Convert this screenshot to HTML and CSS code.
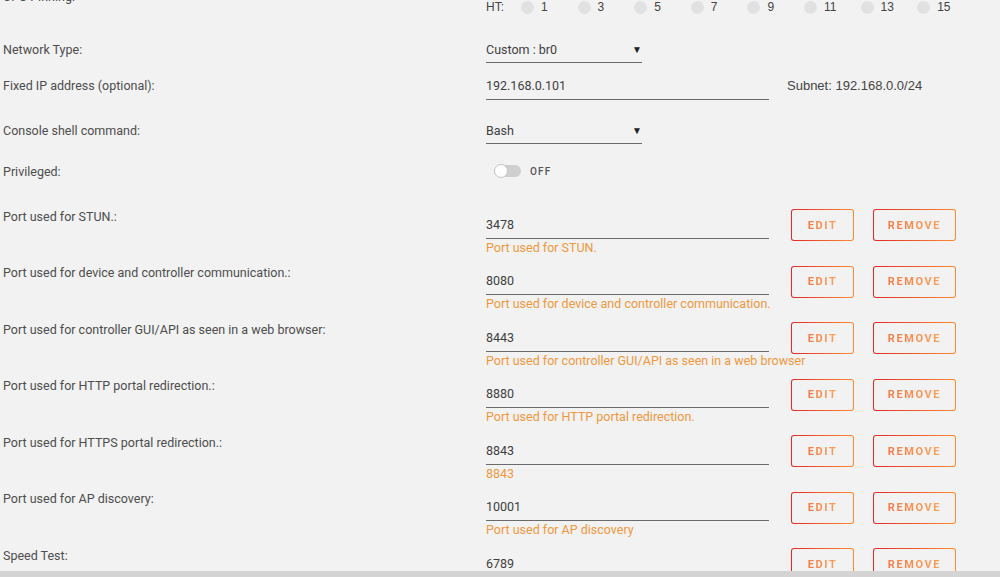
FILE: index.html
```html
<!DOCTYPE html>
<html lang="en">
<head>
    <meta charset="UTF-8">
    <meta name="viewport" content="width=device-width, initial-scale=1.0">
    <title>Container Settings</title>
    <link rel="stylesheet" href="styles.css">
</head>
<body>

    <div class="settings">
        <!-- CPU pinning -->
        <div class="row row-cpu">
            <div class="label">CPU Pinning:</div>
            <div class="cpu-line">
                <span class="cpu-tag">HT:</span>
                <span class="cpu"><span class="dot"></span>1</span>
                <span class="cpu"><span class="dot"></span>3</span>
                <span class="cpu"><span class="dot"></span>5</span>
                <span class="cpu"><span class="dot"></span>7</span>
                <span class="cpu"><span class="dot"></span>9</span>
                <span class="cpu"><span class="dot"></span>11</span>
                <span class="cpu"><span class="dot"></span>13</span>
                <span class="cpu"><span class="dot"></span>15</span>
            </div>
        </div>

        <div class="row row-network">
            <div class="label">Network Type:</div>
            <div class="field select">Custom : br0<span class="arrow">&#9660;</span></div>
        </div>

        <div class="row row-ip">
            <div class="label">Fixed IP address (optional):</div>
            <div class="ip-wrap">
                <div class="field text">192.168.0.101</div>
                <span class="subnet">Subnet: 192.168.0.0/24</span>
            </div>
        </div>

        <div class="row row-shell">
            <div class="label">Console shell command:</div>
            <div class="field select">Bash<span class="arrow">&#9660;</span></div>
        </div>

        <div class="row row-priv">
            <div class="label">Privileged:</div>
            <div class="switch">
                <span class="track"><span class="knob"></span></span>
                <span class="switch-text">OFF</span>
            </div>
        </div>

        <!-- Port mappings -->
        <div class="row port">
            <div class="label">Port used for STUN.:</div>
            <div class="port-input">
                <div class="field text">3478</div>
                <div class="help">Port used for STUN.</div>
            </div>
            <div class="actions">
                <button class="btn btn-edit"><span>EDIT</span></button>
                <button class="btn btn-remove"><span>REMOVE</span></button>
            </div>
        </div>

        <div class="row port">
            <div class="label">Port used for device and controller communication.:</div>
            <div class="port-input">
                <div class="field text">8080</div>
                <div class="help">Port used for device and controller communication.</div>
            </div>
            <div class="actions">
                <button class="btn btn-edit"><span>EDIT</span></button>
                <button class="btn btn-remove"><span>REMOVE</span></button>
            </div>
        </div>

        <div class="row port">
            <div class="label">Port used for controller GUI/API as seen in a web browser:</div>
            <div class="port-input">
                <div class="field text">8443</div>
                <div class="help">Port used for controller GUI/API as seen in a web browser</div>
            </div>
            <div class="actions">
                <button class="btn btn-edit"><span>EDIT</span></button>
                <button class="btn btn-remove"><span>REMOVE</span></button>
            </div>
        </div>

        <div class="row port">
            <div class="label">Port used for HTTP portal redirection.:</div>
            <div class="port-input">
                <div class="field text">8880</div>
                <div class="help">Port used for HTTP portal redirection.</div>
            </div>
            <div class="actions">
                <button class="btn btn-edit"><span>EDIT</span></button>
                <button class="btn btn-remove"><span>REMOVE</span></button>
            </div>
        </div>

        <div class="row port">
            <div class="label">Port used for HTTPS portal redirection.:</div>
            <div class="port-input">
                <div class="field text">8843</div>
                <div class="help">8843</div>
            </div>
            <div class="actions">
                <button class="btn btn-edit"><span>EDIT</span></button>
                <button class="btn btn-remove"><span>REMOVE</span></button>
            </div>
        </div>

        <div class="row port">
            <div class="label">Port used for AP discovery:</div>
            <div class="port-input">
                <div class="field text">10001</div>
                <div class="help">Port used for AP discovery</div>
            </div>
            <div class="actions">
                <button class="btn btn-edit"><span>EDIT</span></button>
                <button class="btn btn-remove"><span>REMOVE</span></button>
            </div>
        </div>

        <div class="row port">
            <div class="label">Speed Test:</div>
            <div class="port-input">
                <div class="field text">6789</div>
            </div>
            <div class="actions">
                <button class="btn btn-edit"><span>EDIT</span></button>
                <button class="btn btn-remove"><span>REMOVE</span></button>
            </div>
        </div>
    </div>

    <div class="hscroll"></div>

</body>
</html>
```

FILE: styles.css
```css
body {
    margin: 0;
    background: #f2f2f2;
    font-family: Roboto, "Liberation Sans", sans-serif;
    font-size: 12.5px;
    line-height: 17px;
    color: #4a4a4a;
    overflow: hidden;
}
.settings {
    padding-left: 3px;
    margin-top: -12px;
}
.row {
    display: grid;
    grid-template-columns: 483px auto;
    align-items: start;
}
.label {
    color: #4d4d4d;
    white-space: nowrap;
}

/* cpu pinning */
.cpu-line {
    display: flex;
    align-items: center;
    padding-top: 10.5px;
    font-family: "Liberation Sans", Arial, sans-serif;
    font-size: 12px;
    color: #444;
}
.cpu-tag {
    width: 35px;
}
.cpu {
    display: inline-flex;
    align-items: center;
    width: 56.6px;
}
.dot {
    width: 13px;
    height: 13px;
    border-radius: 50%;
    background: #e1e1e1;
    margin-right: 7px;
}

/* inputs */
.field {
    color: #3e3e3e;
    border-bottom: 1px solid #6a6a6a;
}
.select {
    width: 156px;
    padding-bottom: 4px;
    display: flex;
    justify-content: space-between;
}
.arrow {
    font-size: 10px;
    margin-right: 0;
    color: #222;
}
.text {
    width: 283px;
    padding-bottom: 5px;
}
.row-network { margin-top: 25px; }
.row-ip { margin-top: 14px; }
.row-shell { margin-top: 22px; }
.row-priv { margin-top: 19px; }

.ip-wrap {
    display: flex;
    align-items: flex-start;
}
.subnet {
    margin-left: 18px;
    font-family: "Liberation Sans", Arial, sans-serif;
    font-size: 13px;
    color: #444;
}

/* privileged switch */
.switch {
    display: flex;
    align-items: center;
    margin-left: 8px;
}
.track {
    width: 27px;
    height: 12px;
    border-radius: 6px;
    background: #cfcfcf;
    position: relative;
}
.knob {
    position: absolute;
    left: 0;
    top: -1px;
    width: 12px;
    height: 12px;
    border-radius: 50%;
    background: #fff;
    border: 1px solid #c4c4c4;
}
.switch-text {
    margin-left: 9px;
    font-size: 10px;
    font-weight: 500;
    letter-spacing: 1.2px;
    color: #555;
}

/* port rows */
.port {
    grid-template-columns: 483px 283px auto;
    margin-bottom: 8.5px;
}
.row-priv + .port {
    margin-top: 28px;
}
.port-input {
    padding-top: 8px;
    min-height: 40px;
}
.help {
    color: #f0983e;
    white-space: nowrap;
}
.actions {
    display: flex;
    gap: 19px;
    margin-left: 22px;
    margin-top: 1.5px;
}
.btn {
    height: 32px;
    padding: 0;
    border: 1px solid transparent;
    border-radius: 3px;
    background: linear-gradient(#f2f2f2, #f2f2f2) padding-box,
                linear-gradient(90deg, #e22828, #ff8c2f) border-box;
    font-family: Roboto, sans-serif;
    font-size: 11px;
    font-weight: bold;
    letter-spacing: 1.6px;
    cursor: pointer;
}
.btn span {
    background: linear-gradient(90deg, #f47a45, #ffa25a);
    -webkit-background-clip: text;
    background-clip: text;
    color: transparent;
}
.btn-edit {
    width: 63px;
}
.btn-remove {
    width: 83px;
}

.hscroll {
    position: fixed;
    left: 0;
    right: 0;
    bottom: 0;
    height: 6px;
    background: #d4d4d4;
}
```
